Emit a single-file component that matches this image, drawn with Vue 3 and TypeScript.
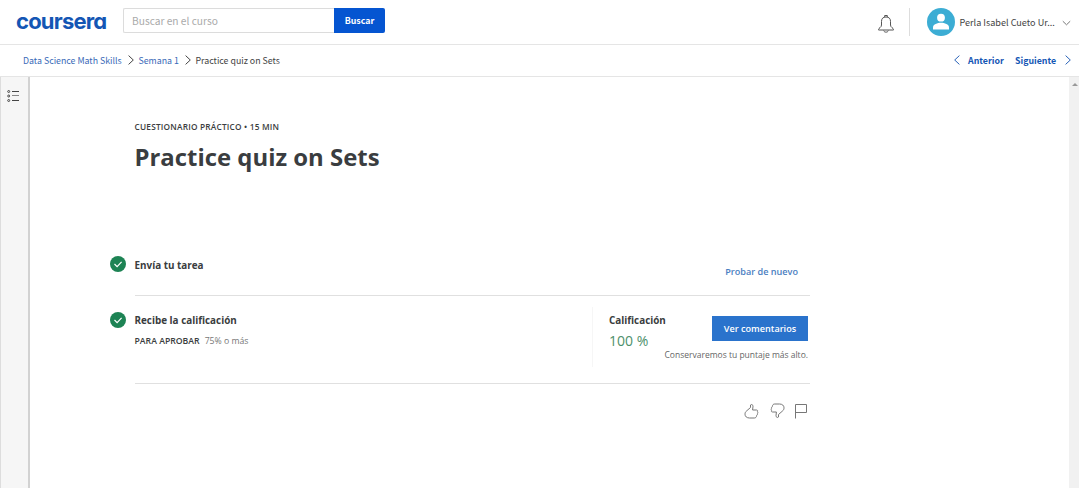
<script setup lang="ts">
import { ref } from 'vue'

const query = ref('')
const course = 'Data Science Math Skills'
const week = 'Semana 1'
const title = 'Practice quiz on Sets'
</script>

<template>
  <div class="page">
    <header class="topbar">
      <a class="logo">coursera</a>
      <form class="search" @submit.prevent>
        <input v-model="query" class="search-input" placeholder="Buscar en el curso" />
        <button class="search-btn">Buscar</button>
      </form>
      <div class="spacer"></div>
      <svg class="bell" viewBox="0 0 18 20" fill="none" stroke="#555" stroke-width="1">
        <path d="M1.500 15.500c0-1.500 3-2 3-4.500V7.500c0-3 1.500-4.500 4.500-4.500s4.500 1.500 4.500 4.500V11c0 2.500 3 3 3 4.500v.5h-15z" />
        <path d="M7.700 3V1.500h2.600V3M6.700 16.500c.3 2.200 4.300 2.200 4.600 0" />
      </svg>
      <div class="divider"></div>
      <svg class="avatar" viewBox="0 0 28 28">
        <circle cx="14" cy="14" r="14" fill="#3cadd4" />
        <circle cx="14" cy="9.700" r="3.900" fill="#fff" />
        <path d="M6 21.500v-2.200c0-3 4.500-4.500 8-4.500s8 1.500 8 4.500v2.200z" fill="#fff" />
      </svg>
      <span class="user">Perla Isabel Cueto Ur...</span>
      <svg class="caret" viewBox="0 0 9 6" fill="none" stroke="#777"><path d="M.8 1.200L4.500 4.800 8.200 1.200" /></svg>
    </header>

    <nav class="crumbs">
      <a class="crumb course">{{ course }}</a>
      <svg class="arrow" viewBox="0 0 6 10" fill="none" stroke="#444"><path d="M.6.600L5.300 5 .6 9.400" /></svg>
      <a class="crumb week">{{ week }}</a>
      <svg class="arrow" viewBox="0 0 6 10" fill="none" stroke="#444"><path d="M.6.600L5.300 5 .6 9.400" /></svg>
      <span class="crumb current">{{ title }}</span>
      <div class="spacer"></div>
      <svg class="step" viewBox="0 0 6 10" fill="none" stroke="#2a63b8"><path d="M5.400.6L.7 5l4.700 4.400" /></svg>
      <a class="step-link prev">Anterior</a>
      <a class="step-link next">Siguiente</a>
      <svg class="step" viewBox="0 0 6 10" fill="none" stroke="#2a63b8"><path d="M.6.600L5.300 5 .6 9.400" /></svg>
    </nav>

    <div class="body">
      <aside class="rail">
        <svg class="list" viewBox="0 0 12 12" fill="none" stroke="#444" stroke-width="1">
          <circle cx="1.700" cy="1.500" r="1" /><circle cx="1.700" cy="6" r="1" /><circle cx="1.700" cy="10.500" r="1" />
          <path d="M5 1.500h7M5 10.500h7" /><path d="M5 5.500h7" stroke="#888" />
        </svg>
      </aside>
      <main class="content">
        <div class="kicker">CUESTIONARIO PRÁCTICO • 15 MIN</div>
        <h1>{{ title }}</h1>
        <section class="row submit">
          <svg class="check" viewBox="0 0 16 16"><circle cx="8" cy="8" r="8" fill="#1d8354" /><path d="M4.500 8l2.600 2.600 4.500-4.800" fill="none" stroke="#fff" stroke-width="1.200" /></svg>
          <h2 class="submit-title">Envía tu tarea</h2>
          <a class="retry">Probar de nuevo</a>
        </section>
        <section class="row grade">
          <svg class="check" viewBox="0 0 16 16"><circle cx="8" cy="8" r="8" fill="#1d8354" /><path d="M4.500 8l2.600 2.600 4.500-4.800" fill="none" stroke="#fff" stroke-width="1.200" /></svg>
          <div class="info">
            <h2 class="receive">Recibe la calificación</h2>
            <p class="pass"><b>PARA APROBAR</b><span>75% o más</span></p>
          </div>
          <div class="result">
            <div class="score">
              <h2 class="score-title">Calificación</h2>
              <div class="percent">100 %</div>
            </div>
            <button class="feedback">Ver comentarios</button>
            <p class="note">Conservaremos tu puntaje más alto.</p>
          </div>
        </section>
        <div class="actions">
          <svg class="thumb" viewBox="0 0 15 16" fill="none" stroke="#777" stroke-width="1">
            <path d="M2.500 8L6.500 4.500V2c1-1 2.500-.3 2.500 1.200L8.600 7h3.900c1.100 0 1.500 1 .9 1.700.6.700.5 1.500 0 2 .2.800-.1 1.300-.7 1.700-.2 1.700-1 2.600-2.400 2.600H5.500C2.700 15 1 13.400 1 11.200 1 9.800 1.500 8.800 2.500 8z" />
          </svg>
          <svg class="thumb down" viewBox="0 0 15 16" fill="none" stroke="#777" stroke-width="1">
            <path d="M2.500 8L6.500 4.500V2c1-1 2.500-.3 2.500 1.200L8.600 7h3.900c1.100 0 1.500 1 .9 1.700.6.700.5 1.500 0 2 .2.800-.1 1.300-.7 1.700-.2 1.700-1 2.600-2.400 2.600H5.500C2.700 15 1 13.400 1 11.200 1 9.800 1.500 8.800 2.500 8z" />
          </svg>
          <svg class="flag" viewBox="0 0 12 16" fill="none" stroke="#777" stroke-width="1"><path d="M.5 15.500V1.500h11v8H.5" /></svg>
        </div>
      </main>
      <div class="scrollbar"><i></i></div>
    </div>
  </div>
</template>

<style>
body {
  margin: 0;
  background: #fff;
  overflow: hidden;
}
</style>

<style scoped>
* { box-sizing: border-box; }
.page {
  width: 1079px;
  height: 488px;
  display: flex;
  flex-direction: column;
  overflow: hidden;
  font-family: "Open Sans", "Noto Sans", sans-serif;
  color: #3a3d40;
}
svg { display: block; flex: none; }
.spacer { flex: 1; }
.topbar, .crumbs {
  flex: none;
  display: flex;
  align-items: center;
  white-space: nowrap;
  font-family: "Noto Sans CJK SC", "Open Sans", sans-serif;
}
.topbar {
  height: 45px;
  padding: 0 8px 0 16px;
  border-bottom: 1px solid #e5e5e5;
}
.logo {
  width: 107px;
  height: 25px;
  line-height: 22px;
  font-family: Inter, sans-serif;
  font-feature-settings: "cv11";
  font-weight: 700;
  font-size: 22px;
  letter-spacing: -0.8px;
  color: #1456b4;
}
.search {
  display: flex;
  margin-top: -3px;
}
.search-input {
  width: 211px;
  height: 25px;
  padding: 0 8px 1px;
  border: 1px solid #dcdcdc;
  border-right: 0;
  border-radius: 2px 0 0 2px;
  outline: 0;
  font: 10.2px "Noto Sans CJK SC", sans-serif;
}
.search-input::placeholder { color: #aaa; opacity: 1; }
.search-btn {
  width: 51px;
  height: 25px;
  padding: 0 0 1px;
  border: 0;
  border-radius: 0 2px 2px 0;
  background: #0555d1;
  color: #fff;
  font: 700 8.8px "Noto Sans CJK SC", sans-serif;
}
.bell { width: 18px; height: 20px; margin: 4px 14px 0 0; }
.divider { width: 1px; height: 28px; background: #ddd; margin-right: 17px; }
.avatar { width: 28px; height: 28px; margin-right: 5px; }
.user { width: 102px; margin-left: -0.5px; margin-right: 0.5px; font-size: 9.1px; color: #444; }
.caret { width: 9px; height: 6px; margin-top: 2px; }
.crumbs {
  height: 32px;
  padding: 0 8px 1px 23px;
  border-bottom: 1px solid #e5e5e5;
  font-size: 8.8px;
}
.crumb { color: #3a6ab8; }
.course { width: 104.5px; }
.week { width: 46px; }
.current { color: #444; }
.arrow { width: 6px; height: 10px; margin-right: 5px; }
.week + .arrow { margin-right: 5px; }
.step { width: 6px; height: 10px; }
.step-link { font-weight: 700; color: #1456b4; }
.prev { width: 47px; margin-left: 8px; }
.next { width: 50px; }
.body { flex: 1; display: flex; min-height: 0; }
.rail {
  flex: none;
  width: 30px;
  padding: 13px 0 0 6px;
  background: #f6f6f6;
  border-left: 1px solid #ddd;
  border-right: 2px solid #d2d2d2;
}
.list { width: 12px; height: 12px; }
.content { flex: none; width: 780px; padding-left: 79.500px; }
.kicker {
  margin: 44px 0 0 25px;
  line-height: 12px;
  font-size: 8.3px;
  letter-spacing: 0.2px;
  font-weight: 600;
}
h1 {
  margin: 6px 0 0 25px;
  line-height: 36px;
  font-size: 23.9px;
  font-weight: 700;
}
h2 { margin: 0; line-height: 14px; font-size: 9.9px; font-weight: 700; }
p { margin: 0; }
.row { display: flex; align-items: flex-start; position: relative; }
.row::after {
  content: "";
  position: absolute;
  left: 25px;
  right: 0;
  bottom: 0;
  height: 1px;
  background: #e0e0e0;
}
.check { width: 16px; height: 16px; margin-right: 9px; }
.submit { height: 40px; margin-top: 81px; }
.submit h2 { margin-top: 2px; flex: 1; }
.retry {
  margin: 9px 12px 0 0;
  line-height: 13px;
  font-size: 9.1px;
  font-weight: 600;
  color: #4a7ec1;
}
.grade { height: 88px; padding-top: 11px; }
.grade .check { margin-top: 5px; }
.info { flex: 1; padding-top: 6px; }
.pass { display: flex; gap: 5px; margin-top: 8px; line-height: 12px; font-size: 8.7px; }
.pass b { font-weight: 600; }
.pass span { color: #777; }
.result {
  width: 218px;
  height: 60px;
  border-left: 1px solid #f6f6f6;
  display: grid;
  grid-template-columns: 103px 1fr;
  grid-template-rows: 41px 14px;
  padding: 0 2px 0 16px;
}
.score { padding-top: 6px; }
.percent { line-height: 20px; margin-top: 4px; font-size: 14px; color: #4d8f6b; }
.feedback {
  margin-top: 9px;
  width: 96px;
  height: 25px;
  padding: 0;
  border: 0;
  background: #2a73cc;
  color: #fff;
  font: 600 9.1px "Open Sans", sans-serif;
}
.note {
  grid-column: 1 / 3;
  text-align: right;
  white-space: nowrap;
  line-height: 14px;
  font-size: 8.5px;
  color: #666;
}
.actions { display: flex; justify-content: flex-end; margin: 19px 3px 0 0; }
.thumb { width: 15px; height: 16px; margin-right: 11px; }
.down { transform: rotate(180deg); margin-right: 10px; }
.flag { width: 12px; height: 16px; }
.scrollbar { margin-left: auto; width: 10px; background: #f1f1f1; padding: 6px 0 0 3px; }
.scrollbar i {
  display: block;
  width: 0;
  border: 3px solid transparent;
  border-top: 0;
  border-bottom: 3px solid #999;
}
</style>
